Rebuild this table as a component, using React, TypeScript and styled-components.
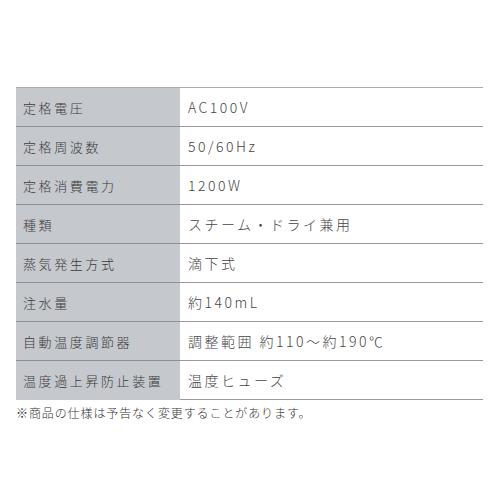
import React from "react"
import styled, { createGlobalStyle } from "styled-components"

const GlobalStyle = createGlobalStyle`
	html, body {
		margin: 0;
		padding: 0;
		background: #ffffff;
	}
	body {
		font-family: "Noto Sans CJK JP", "Noto Sans", sans-serif;
		color: #444;
	}
`

const Page = styled.div`
	width: 500px;
	height: 500px;
	padding: 87px 17px 0 16px;
	box-sizing: border-box;
`

const Table = styled.div`
	display: grid;
	grid-template-columns: 164px 1fr;
	border-top: 1px solid #a9abae;
`

const Label = styled.div<{ last?: boolean }>`
	height: 38px;
	display: flex;
	align-items: center;
	padding-left: 7px;
	background: #c5c8cd;
	border-bottom: 1px solid ${(p) => (p.last ? "#c5c8cd" : "#8c8f94")};
	font-size: 13px;
	font-weight: 300;
	letter-spacing: 2.6px;
	color: #3a3a3a;
	white-space: nowrap;
`

const Value = styled.div`
	height: 38px;
	display: flex;
	align-items: center;
	padding-left: 8px;
	border-bottom: 1px solid #9a9a9a;
	font-size: 14px;
	font-weight: 300;
	letter-spacing: 2.5px;
	color: #444;
	white-space: nowrap;
`

const Note = styled.p`
	margin: 4px 0 0;
	font-size: 12px;
	font-weight: 300;
	letter-spacing: 0.9px;
	color: #333;
`

const specs: [string, string][] = [
	["定格電圧", "AC100V"],
	["定格周波数", "50/60Hz"],
	["定格消費電力", "1200W"],
	["種類", "スチーム・ドライ兼用"],
	["蒸気発生方式", "滴下式"],
	["注水量", "約140mL"],
	["自動温度調節器", "調整範囲 約110～約190℃"],
	["温度過上昇防止装置", "温度ヒューズ"],
]

const App = () => {
	return (
		<Page>
			<GlobalStyle />
			<Table>
				{specs.map(([label, value], i) => (
					<React.Fragment key={label}>
						<Label last={i === specs.length - 1}>{label}</Label>
						<Value>{value}</Value>
					</React.Fragment>
				))}
			</Table>
			<Note>※商品の仕様は予告なく変更することがあります。</Note>
		</Page>
	)
}

export default App
